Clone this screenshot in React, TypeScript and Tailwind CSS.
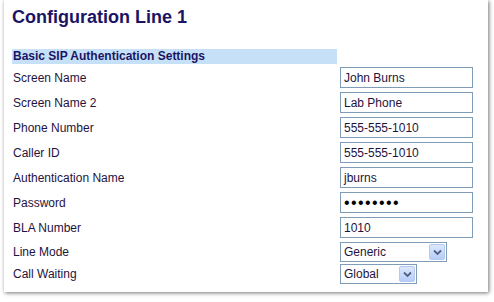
import React from 'react';

type Row = { label: string; value: string; kind: 'text' | 'password' | 'select'; width?: number };

const rows: Row[] = [
  { label: 'Screen Name', value: 'John Burns', kind: 'text' },
  { label: 'Screen Name 2', value: 'Lab Phone', kind: 'text' },
  { label: 'Phone Number', value: '555-555-1010', kind: 'text' },
  { label: 'Caller ID', value: '555-555-1010', kind: 'text' },
  { label: 'Authentication Name', value: 'jburns', kind: 'text' },
  { label: 'Password', value: '••••••••', kind: 'password' },
  { label: 'BLA Number', value: '1010', kind: 'text' },
  { label: 'Line Mode', value: 'Generic', kind: 'select', width: 107 },
  { label: 'Call Waiting', value: 'Global', kind: 'select', width: 77 },
];

function SelectBox({ value, width }: { value: string; width: number }) {
  return (
    <div
      className="flex h-[20px] items-center justify-between border border-[#7f9db9] bg-white pl-[3px] pr-[1px]"
      style={{ width }}
    >
      <span className="text-[12px] text-[#1f1340]">{value}</span>
      <div className="flex h-[16px] w-[16px] items-center justify-center rounded-[2px] border border-[#b5c8ef] bg-gradient-to-b from-[#dce8fd] to-[#b7cdf7]">
        <svg width="9" height="7" viewBox="0 0 9 7">
          <path d="M1 1.5 L4.5 5 L8 1.5" fill="none" stroke="#4d6185" strokeWidth="1.8" />
        </svg>
      </div>
    </div>
  );
}

export default function App() {
  return (
    <div className="h-[302px] w-[494px] bg-white font-['Liberation_Sans',Arial,sans-serif]">
      <div className="ml-[4px] h-[292px] w-[484px] bg-white pl-[8px] pt-[6px] shadow-[1px_1px_4px_rgba(0,0,0,0.55)]">
        <h1 className="h-[22px] text-[18px] font-bold leading-[22px] text-[#1b1464]">Configuration Line 1</h1>

        <div className="mt-[21px] h-[15px] w-[325px] bg-[#c6e0f8] pl-[1px] text-[12px] font-bold leading-[15px] text-[#1b1464]">
          Basic SIP Authentication Settings
        </div>

        <div className="mt-[1px] flex flex-col">
          {rows.map((row, i) => (
            <div
              key={row.label}
              className={`flex items-center ${row.kind === 'select' ? 'h-[22px]' : 'h-[25px]'} ${i === 7 ? 'mt-[1px]' : ''}`}
            >
              <div className="w-[328px] pl-[1px] text-[12px] text-[#1f1340]">{row.label}</div>
              {row.kind === 'select' ? (
                <SelectBox value={row.value} width={row.width ?? 100} />
              ) : (
                <div className="flex h-[21px] w-[133px] items-center border border-[#7f9db9] bg-white pl-[3px]">
                  <span
                    className={
                      row.kind === 'password'
                        ? 'text-[16px] leading-[16px] tracking-[1.4px] text-black'
                        : 'text-[12px] text-[#1f1340]'
                    }
                  >
                    {row.value}
                  </span>
                </div>
              )}
            </div>
          ))}
        </div>
      </div>
    </div>
  );
}
